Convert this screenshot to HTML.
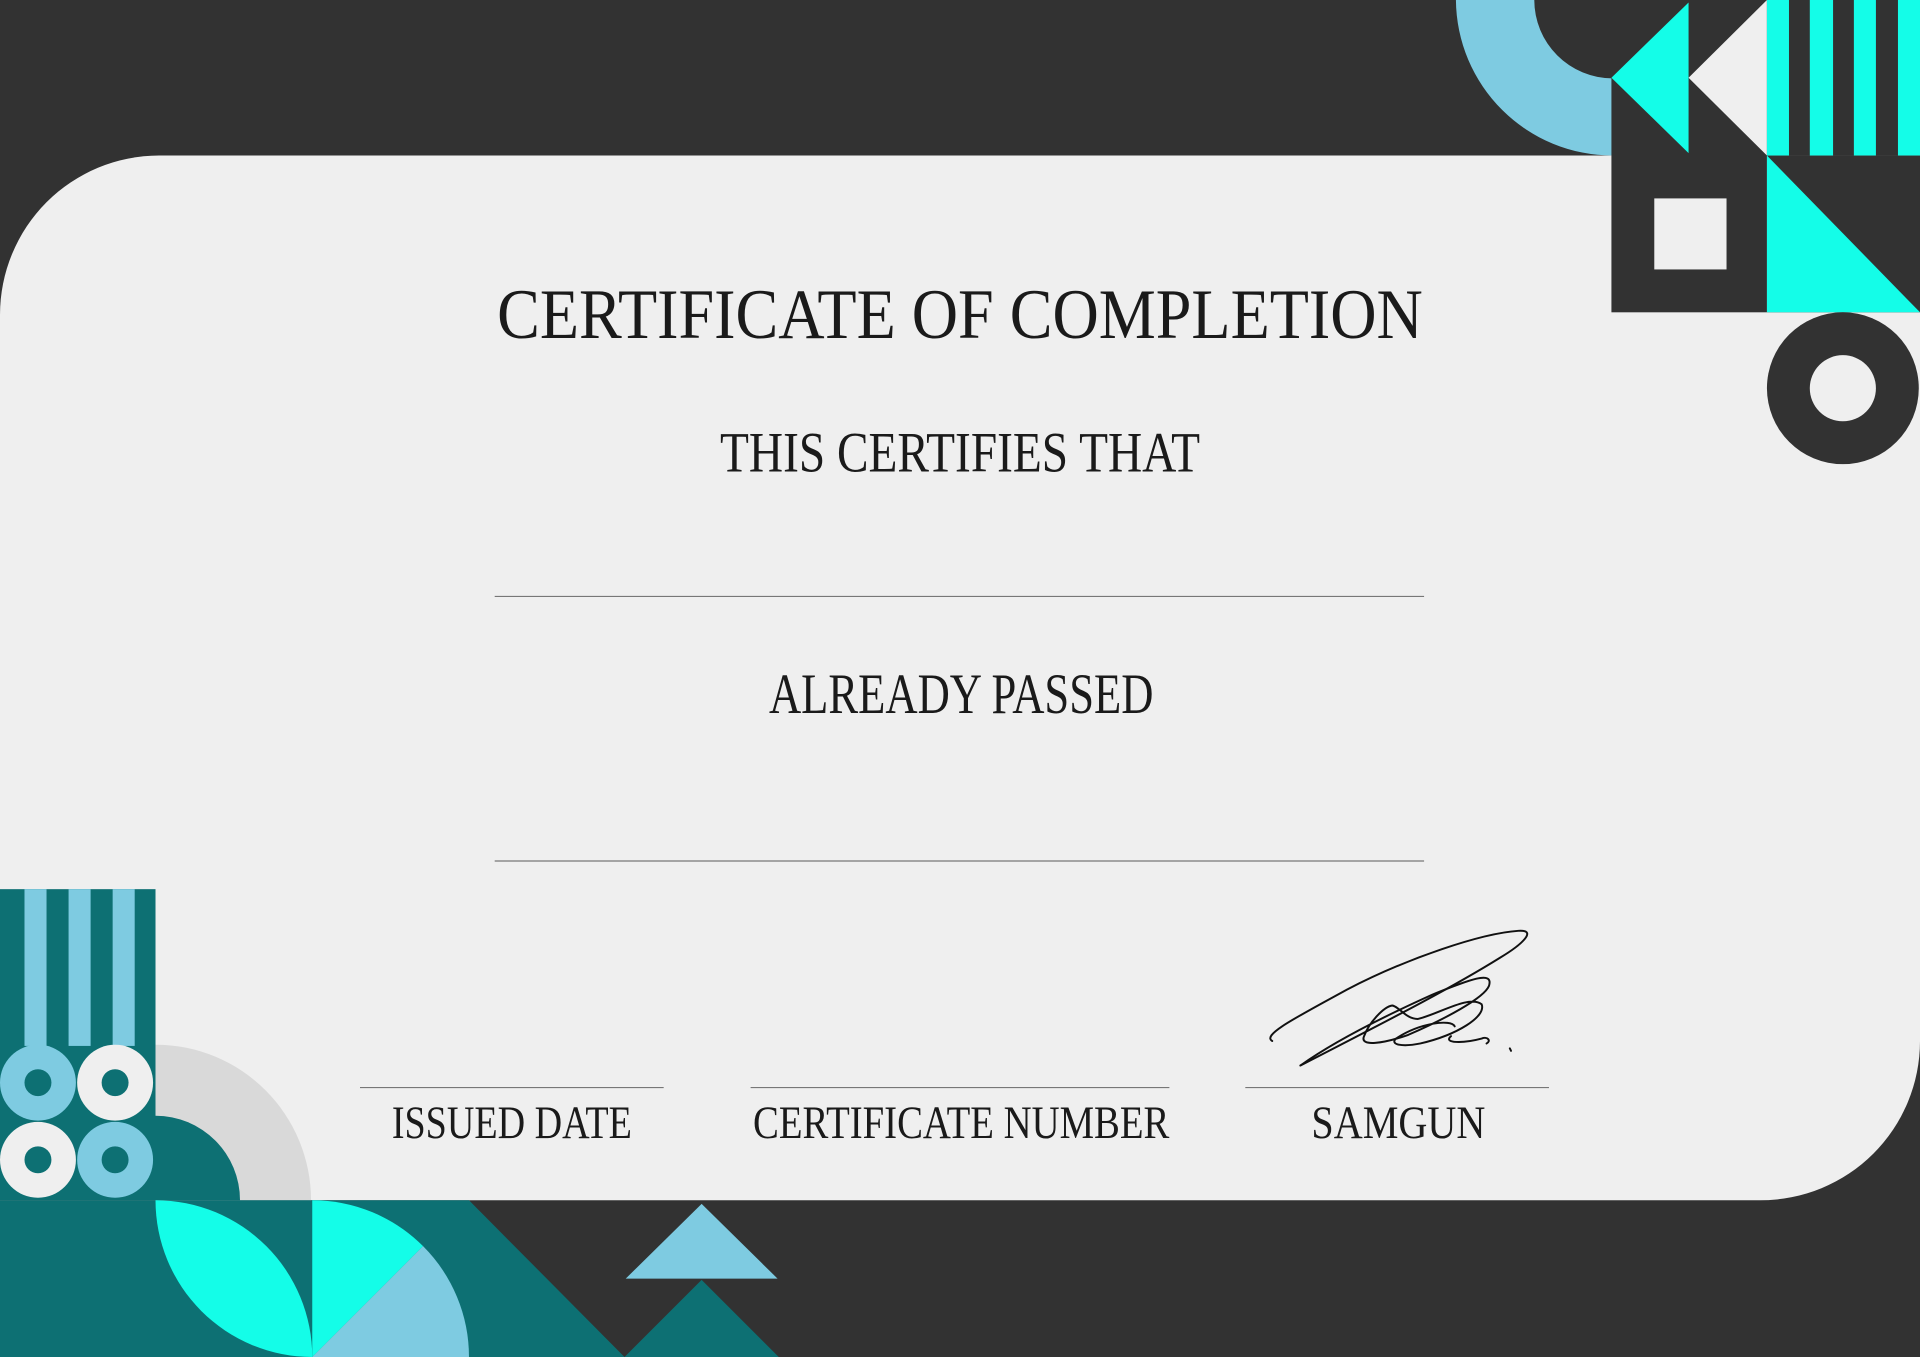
<!DOCTYPE html>
<html><head><meta charset="utf-8"><style>
html,body{margin:0;padding:0;background:#323232;overflow:hidden}
svg{display:block}
text{font-family:"Liberation Serif",serif;fill:#1a1a1a}
</style></head><body>
<svg width="1920" height="1357" viewBox="0 0 1568 1108" preserveAspectRatio="none" xmlns="http://www.w3.org/2000/svg">
<rect width="1568" height="1108" fill="#323232"/>
<path d="M130 127 H1568 V850 A130 130 0 0 1 1438 980 H0 V257 A130 130 0 0 1 130 127 Z" fill="#efefef"/>
<path d="M1189 0 A128 128 0 0 0 1317 127 V64 A64 64 0 0 1 1253 0 Z" fill="#7ecbe1"/>
<rect x="1316" y="0" width="127" height="255" fill="#323232"/>
<polygon points="1443,0 1379,63.5 1443,127" fill="#efefef"/>
<polygon points="1379,2 1316,63.5 1379,125" fill="#14fde8"/>
<rect x="1351" y="162" width="59" height="58" fill="#efefef"/>
<rect x="1443" y="0" width="125" height="127" fill="#323232"/>
<rect x="1443" y="0" width="18" height="127" fill="#14fde8"/>
<rect x="1478" y="0" width="19" height="127" fill="#14fde8"/>
<rect x="1514" y="0" width="18" height="127" fill="#14fde8"/>
<rect x="1550" y="0" width="18" height="127" fill="#14fde8"/>
<rect x="1443" y="127" width="125" height="128" fill="#323232"/>
<polygon points="1443,127 1443,255 1568,255" fill="#14fde8"/>
<circle cx="1505" cy="317" r="62" fill="#323232"/>
<circle cx="1505" cy="317" r="27" fill="#efefef"/>
<rect x="0" y="726" width="127" height="254" fill="#0d7073"/>
<rect x="20" y="726" width="18" height="128" fill="#7ecbe1"/>
<rect x="56" y="726" width="18" height="128" fill="#7ecbe1"/>
<rect x="92" y="726" width="18" height="128" fill="#7ecbe1"/>
<circle cx="31" cy="884" r="31" fill="#7ecbe1"/><circle cx="31" cy="884" r="11" fill="#0d7073"/>
<circle cx="94" cy="884" r="31" fill="#efefef"/><circle cx="94" cy="884" r="11" fill="#0d7073"/>
<circle cx="31" cy="947" r="31" fill="#efefef"/><circle cx="31" cy="947" r="11" fill="#0d7073"/>
<circle cx="94" cy="947" r="31" fill="#7ecbe1"/><circle cx="94" cy="947" r="11" fill="#0d7073"/>
<path d="M127 853 A127 127 0 0 1 254 980 H127 Z" fill="#d9d9d9"/>
<path d="M127 911 A69 69 0 0 1 196 980 H127 Z" fill="#0d7073"/>
<polygon points="0,980 383,980 510,1108 0,1108" fill="#0d7073"/>
<path d="M127 980 A128 128 0 0 0 255 1108 A128 128 0 0 0 127 980 Z" fill="#14fde8"/>
<path d="M255 1108 V980 A128 128 0 0 1 345.5 1017.5 Z" fill="#14fde8"/>
<path d="M255 1108 L345.5 1017.5 A128 128 0 0 1 383 1108 Z" fill="#7ecbe1"/>
<polygon points="511,1044 573,983 635,1044" fill="#7ecbe1"/>
<polygon points="510,1108 573,1045 636,1108" fill="#0d7073"/>
<text x="406" y="276" font-size="58" textLength="756" lengthAdjust="spacingAndGlyphs">CERTIFICATE OF COMPLETION</text>
<text x="588" y="385" font-size="47" textLength="392" lengthAdjust="spacingAndGlyphs">THIS CERTIFIES THAT</text>
<line x1="404" y1="487" x2="1163" y2="487" stroke="#777" stroke-width="1"/>
<text x="628" y="582" font-size="47" textLength="314" lengthAdjust="spacingAndGlyphs">ALREADY PASSED</text>
<line x1="404" y1="703" x2="1163" y2="703" stroke="#777" stroke-width="1"/>
<line x1="294" y1="888" x2="542" y2="888" stroke="#777" stroke-width="1"/>
<line x1="613" y1="888" x2="955" y2="888" stroke="#777" stroke-width="1"/>
<line x1="1017" y1="888" x2="1265" y2="888" stroke="#777" stroke-width="1"/>
<text x="320" y="929" font-size="38" textLength="196" lengthAdjust="spacingAndGlyphs">ISSUED DATE</text>
<text x="615" y="929" font-size="38" textLength="340" lengthAdjust="spacingAndGlyphs">CERTIFICATE NUMBER</text>
<text x="1071" y="929" font-size="38" textLength="142" lengthAdjust="spacingAndGlyphs">SAMGUN</text>
<g fill="none" stroke="#111" stroke-width="1.6" stroke-linecap="round" stroke-linejoin="round">
<path d="M1039 850 C1030 845 1060 830 1100 808 C1150 782 1210 762 1240 760 C1255 759 1245 770 1225 782 C1180 810 1120 840 1062 870"/>
<path d="M1062 870 C1090 850 1130 830 1170 812 C1200 800 1220 792 1216 805 C1212 815 1180 832 1150 845 C1130 852 1110 855 1114 846 C1118 835 1130 822 1137 821 C1143 822 1148 832 1158 832 C1175 828 1200 812 1210 820 C1214 830 1190 845 1160 852 C1145 855 1135 853 1140 848 C1160 835 1185 832 1188 838"/>
<path d="M1185 846 C1178 852 1195 852 1210 848 C1215 846 1218 850 1214 852"/>
<path d="M1233 856 L1234 858"/>
</g>
</svg>
</body></html>
